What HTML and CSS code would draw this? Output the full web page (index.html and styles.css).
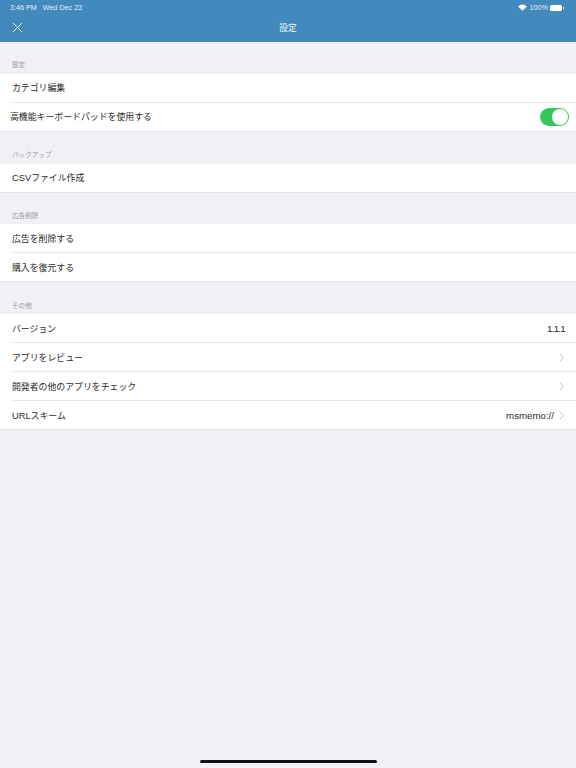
FILE: index.html
```html
<!DOCTYPE html>
<html lang="ja">
<head>
<meta charset="utf-8">
<title>設定</title>
<link rel="stylesheet" href="styles.css">
</head>
<body>
<div class="screen">
  <header class="nav">
    <div class="status">
      <span class="status-left"><span>3:46 PM</span><span>Wed Dec 23</span></span>
      <span class="status-right">
        <svg class="wifi" viewBox="0 0 12 9"><path d="M6 8.8 L0.2 3 A8.2 8.2 0 0 1 11.8 3 Z" fill="#fff"/></svg>
        <span>100%</span>
        <span class="battery"></span><span class="battery-cap"></span>
      </span>
    </div>
    <div class="bar">
      <svg class="close" viewBox="0 0 12 12"><path d="M1.2 1.2 L10.8 10.8 M10.8 1.2 L1.2 10.8" stroke="#fff" stroke-width="1" fill="none"/></svg>
      <span class="title">設定</span>
    </div>
  </header>
  <section>
    <h2 class="label">設定</h2>
    <div class="group">
      <div class="row"><span>カテゴリ編集</span></div>
      <div class="row last row-tight"><span>高機能キーボードパッドを使用する</span><span class="toggle"><span class="knob"></span></span></div>
    </div>
  </section>
  <section>
    <h2 class="label">バックアップ</h2>
    <div class="group">
      <div class="row last"><span><span class="latin-small">CSV</span>ファイル作成</span></div>
    </div>
  </section>
  <section>
    <h2 class="label">広告削除</h2>
    <div class="group">
      <div class="row"><span>広告を削除する</span></div>
      <div class="row last"><span>購入を復元する</span></div>
    </div>
  </section>
  <section>
    <h2 class="label">その他</h2>
    <div class="group">
      <div class="row"><span>バージョン</span><span class="version">1.1.1</span></div>
      <div class="row"><span>アプリをレビュー</span><svg class="chev" viewBox="0 0 6 9"><path d="M1 1 L4.6 4.5 L1 8" stroke="#c4c4c8" stroke-width="1" fill="none"/></svg></div>
      <div class="row"><span>開発者の他のアプリをチェック</span><svg class="chev" viewBox="0 0 6 9"><path d="M1 1 L4.6 4.5 L1 8" stroke="#c4c4c8" stroke-width="1" fill="none"/></svg></div>
      <div class="row last"><span><span class="latin-small">URL</span>スキーム</span><span class="right-group"><span class="latin">msmemo://</span><svg class="chev" viewBox="0 0 6 9"><path d="M1 1 L4.6 4.5 L1 8" stroke="#c4c4c8" stroke-width="1" fill="none"/></svg></span></div>
    </div>
  </section>
  <div class="home"></div>
</div>
</body>
</html>
```
FILE: styles.css
```css
* { box-sizing: border-box; }
html, body { margin: 0; padding: 0; }
body { font-family: "Liberation Sans", "Noto Sans CJK JP", sans-serif; background: #f1f0f5; color: #2a2a2a; }
.screen { position: relative; width: 576px; height: 768px; overflow: hidden; background: #f1f0f5; }
.nav { height: 42px; background: #4289bd; color: #fff; }
.status { height: 14px; padding: 1px 12px 0 10px; display: flex; justify-content: space-between; align-items: center; font-size: 7.2px; color: #e3f0f8; }
.status-left { display: flex; gap: 6px; }
.status-right { display: flex; align-items: center; gap: 2px; }
.wifi { width: 9px; height: 7px; margin-right: 1px; }
.battery { width: 12px; height: 6px; background: #fff; border-radius: 1.5px; display: block; }
.battery-cap { width: 1px; height: 2px; background: #dcebf4; margin-left: -1px; }
.bar { height: 28px; position: relative; display: flex; align-items: center; justify-content: center; }
.close { position: absolute; left: 12px; top: 8px; width: 11px; height: 11px; }
.title { font-size: 8.7px; color: #f2f7fb; margin-top: -1px; }
.label { height: 31.8px; margin: 0; padding: 0 12px 3.5px; display: flex; align-items: flex-end; font-size: 6.6px; line-height: 10px; font-weight: 400; color: #98989d; }
.group { background: #fff; }
.row { height: 29px; margin-left: 12px; padding-right: 11px; display: flex; align-items: center; justify-content: space-between; font-size: 8.9px; border-bottom: 1px solid #e8e8eb; }
.row.last { margin-left: 0; padding-left: 12px; border-bottom-color: #e3e3e7; }
.row.row-tight { padding-left: 10px; padding-right: 7px; }
.toggle { width: 29px; height: 18px; border-radius: 9px; background: #34c759; position: relative; display: block; }
.knob { position: absolute; right: 1px; top: 1px; width: 16px; height: 16px; border-radius: 50%; background: #fff; }
.latin { font-size: 9.7px; }
.latin-small { font-size: 9.3px; }
.version { font-size: 9.7px; letter-spacing: -0.7px; }
.chev { width: 6px; height: 9px; display: block; }
.right-group { display: flex; align-items: center; gap: 5px; }
.home { position: absolute; left: 200px; top: 760px; width: 177px; height: 3px; border-radius: 2px; background: #111; }
```
